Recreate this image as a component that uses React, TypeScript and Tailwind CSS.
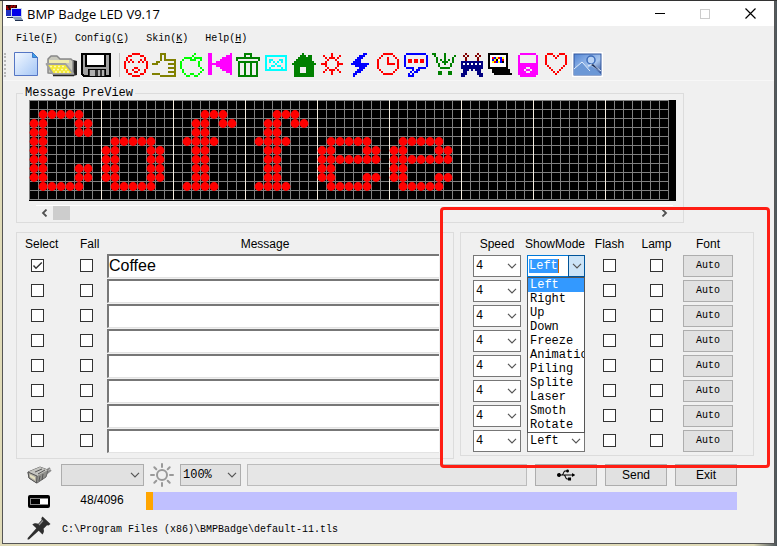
import { useState } from "react";
import type { ReactNode } from "react";
import { FaUsb } from "react-icons/fa";

const MONO_SM = "font-['Liberation_Mono',monospace] text-[10px]";
const MONO_MD = "font-['Liberation_Mono',monospace] text-[12px]";

type Palette = Record<string, string>;

/* Draws a bitmap: every character of a row is one cell, "." is empty. */
function Pixels({ rows, colors, cell = 2 }: { rows: string[]; colors: Palette; cell?: number }) {
  const w = rows[0].length * cell;
  const h = rows.length * cell;
  return (
    <svg width={w} height={h} viewBox={`0 0 ${w} ${h}`} shapeRendering="crispEdges" aria-hidden="true">
      {rows.flatMap((row, y) =>
        row.split("").map((c, x) =>
          c === "." ? null : (
            <rect key={`${x}-${y}`} x={x * cell} y={y * cell} width={cell} height={cell} fill={colors[c]} />
          ),
        ),
      )}
    </svg>
  );
}

const STAMPS: { name: string; colors: Palette; rows: string[] }[] = [
  {
    name: "Face",
    colors: { "#": "#ff0000" },
    rows: [
      "....####....",
      "..##....##..",
      ".#........#.",
      ".#.#....#.#.",
      "#.#.#..#.#.#",
      "#..........#",
      "#..........#",
      "#....##....#",
      ".#..#..#..#.",
      ".#...##...#.",
      "..##....##..",
      "....####....",
    ],
  },
  {
    name: "Thumb up",
    colors: { "#": "#808000" },
    rows: [
      "....###.....",
      "....#.#.....",
      "....#.#.....",
      "....#.######",
      "..##.......#",
      "###.....####",
      "...........#",
      "........####",
      "...........#",
      "........####",
      "####.......#",
      "....########",
    ],
  },
  {
    name: "Apple",
    colors: { "#": "#00ff00" },
    rows: [
      ".......#....",
      "......#.....",
      "..####.####.",
      ".#...###..#.",
      "#........#..",
      "#........#..",
      "#........#..",
      "#.........#.",
      ".#.........#",
      ".#........#.",
      "..#..##..#..",
      "...##..##...",
    ],
  },
  {
    name: "Rewind",
    colors: { "#": "#ff00ff" },
    rows: [
      "##.........#",
      "##.......###",
      "##.....#####",
      "##....######",
      "##..########",
      "############",
      "##..########",
      "##....######",
      "##.....#####",
      "##.......###",
      "##.........#",
      "............",
    ],
  },
  {
    name: "Bin",
    colors: { "#": "#008000" },
    rows: [
      "....####....",
      "....#..#....",
      "############",
      "#..........#",
      ".##########.",
      ".#..#..#..#.",
      ".#..#..#..#.",
      ".#..#..#..#.",
      ".#..#..#..#.",
      ".#..#..#..#.",
      ".#..#..#..#.",
      ".##########.",
    ],
  },
  {
    name: "Mail",
    colors: { "#": "#00ffff" },
    rows: [
      "...........",
      "###########",
      "#.........#",
      "#.##...##.#",
      "#.#.#.#.#.#",
      "#....#....#",
      "#..##.##..#",
      "#.#.....#.#",
      "###########",
      "...........",
      "...........",
      "...........",
    ],
  },
  {
    name: "House",
    colors: { "#": "#008000" },
    rows: [
      ".....#......",
      "....###.##..",
      "...#######..",
      "..########..",
      ".##########.",
      "############",
      ".##########.",
      ".###...####.",
      ".###...####.",
      ".###...####.",
      ".##########.",
      ".##########.",
    ],
  },
  {
    name: "Sun",
    colors: { "#": "#ff0000" },
    rows: [
      ".....#.....",
      ".#...#...#.",
      "..#.###.#..",
      "...#...#...",
      "..#.....#..",
      "###.....###",
      "..#.....#..",
      "...#...#...",
      "..#.###.#..",
      ".#...#...#.",
      ".....#.....",
      "...........",
    ],
  },
  {
    name: "Lightning",
    colors: { "#": "#0000ff" },
    rows: [
      "......##.",
      "....###..",
      "...###...",
      "..###....",
      ".####....",
      "#########",
      "..######.",
      "....###..",
      "...###...",
      "..###....",
      ".##......",
      ".#.......",
    ],
  },
  {
    name: "Clock",
    colors: { "#": "#ff0000" },
    rows: [
      "...#####...",
      "..#.....#..",
      ".#...#...#.",
      "#....#....#",
      "#....#....#",
      "#....####.#",
      "#.........#",
      "#.........#",
      ".#.......#.",
      "..#.....#..",
      "...#####...",
      "...........",
    ],
  },
  {
    name: "Speech",
    colors: { "#": "#0000ff", r: "#ff0000" },
    rows: [
      ".##########.",
      "#..........#",
      "#..........#",
      "#.rr.rr.rr.#",
      "#.rr.rr.rr.#",
      "#..........#",
      "#..........#",
      ".####..####.",
      "....#.##....",
      "...#.##.....",
      "..#.#.......",
      "..###.......",
    ],
  },
  {
    name: "Cart",
    colors: { "#": "#008000" },
    rows: [
      "##....#.....",
      ".#....#....#",
      "..#...#...#.",
      "..#.#.#.#.#.",
      "..#..###..#.",
      "...#..#..#..",
      "...#.....#..",
      "....#####...",
      "............",
      "...##...##..",
      "...##...##..",
      "............",
    ],
  },
  {
    name: "Castle",
    colors: { "#": "#000080", m: "#800000", w: "#ffffff" },
    rows: [
      "..m.....m..",
      ".m.m...m.m.",
      "..m.....m..",
      "..m.....m..",
      "###########",
      "#w#w#w#w#w#",
      "###########",
      "###########",
      ".###.#.###.",
      ".##.....##.",
      "###.....###",
      "##.......##",
    ],
  },
  {
    name: "Computer",
    colors: { "#": "#000000", w: "#ffffff", r: "#ff0000", b: "#0000ff", y: "#ffff00" },
    rows: [
      "##########..",
      "#wwwwwwww#..",
      "#wrbyrbyw#..",
      "#wby#wbrw#..",
      "#wyrbyb#w#..",
      "#wwwwwwww#..",
      "#wwwwwwww#..",
      "##########..",
      "..#########.",
      "..#########.",
      "...#########",
      "............",
    ],
  },
  {
    name: "Player",
    colors: { "#": "#ff00ff" },
    rows: [
      ".########.",
      "#........#",
      "#........#",
      "#........#",
      "#........#",
      "##########",
      "##########",
      "####..####",
      "###.##.###",
      "####..####",
      "##########",
      ".########.",
    ],
  },
  {
    name: "Heart",
    colors: { "#": "#ff0000" },
    rows: [
      ".###...###.",
      "#...#.#...#",
      "#....#....#",
      "#.........#",
      "#.........#",
      "#.........#",
      ".#.......#.",
      "..#.....#..",
      "...#...#...",
      "....#.#....",
      ".....#.....",
      "...........",
    ],
  },
];

const GLYPHS: Record<string, string[]> = {
  C: [".#####..", "##...##.", "##...##.", "##......", "##......", "##......", "##...##.", "##...##.", ".#####.."],
  o: ["", "", "", ".#####..", "##...##.", "##...##.", "##...##.", "##...##.", ".#####.."],
  f: ["...###..", "..##.##.", "..##....", ".####...", "..##....", "..##....", "..##....", "..##....", ".####..."],
  e: ["", "", "", ".#####..", "##...##.", "#######.", "##......", "##...##.", ".#####.."],
};

function LedMatrix({ text }: { text: string }) {
  return (
    <svg width="647" height="101" viewBox="0 0 647 101" role="img" aria-label={`Preview of ${text}`}>
      <rect width="647" height="101" fill="#000" />
      <g shapeRendering="crispEdges">
        {Array.from({ length: 12 }, (_, i) => (
          <rect key={i} x="0" y={i * 9} width="640" height="1" fill="#808080" />
        ))}
        {Array.from({ length: 72 }, (_, i) => (
          <rect key={i} x={i * 9} y="0" width="1" height="100" fill={i % 8 === 0 && i > 0 ? "#f5ede0" : "#808080"} />
        ))}
      </g>
      {text.split("").flatMap((ch, n) =>
        (GLYPHS[ch] ?? []).flatMap((row, y) =>
          row.split("").map((c, x) =>
            c === "#" ? (
              <circle key={`${n}-${x}-${y}`} cx={(n * 8 + x) * 9 + 5} cy={(y + 1) * 9 + 5.5} r="4.4" fill="#ff0000" />
            ) : null,
          ),
        ),
      )}
    </svg>
  );
}

function Chevron() {
  return (
    <svg width="10" height="6" viewBox="0 0 10 6" fill="none" stroke="#555" strokeWidth="1.2" aria-hidden="true">
      <path d="M1 .8 5 4.8 9 .8" />
    </svg>
  );
}

function Tick({ label, initial = false }: { label: string; initial?: boolean }) {
  return (
    <span className="grid size-[13px]">
      <input
        type="checkbox"
        aria-label={label}
        defaultChecked={initial}
        className="peer col-start-1 row-start-1 size-[13px] appearance-none border border-[#333] bg-white"
      />
      <svg
        viewBox="0 0 13 13"
        className="pointer-events-none invisible col-start-1 row-start-1 size-[13px] peer-checked:visible"
        fill="none"
        stroke="#333"
        strokeWidth="1.4"
        aria-hidden="true"
      >
        <path d="M2.5 6.5 5 9.2 10.8 3.5" />
      </svg>
    </span>
  );
}

function Combo({
  label,
  options,
  value,
  box,
}: {
  label: string;
  options: string[];
  value: string;
  box: string;
}) {
  return (
    <span className={`grid h-[22px] items-center border ${box}`}>
      <select
        aria-label={label}
        defaultValue={value}
        className={`col-start-1 row-start-1 h-5 w-full appearance-none pl-[2px] text-black outline-none ${MONO_MD}`}
      >
        {options.map((o) => (
          <option key={o}>{o}</option>
        ))}
      </select>
      <span className="pointer-events-none col-start-1 row-start-1 justify-self-end pr-[3px]">
        <Chevron />
      </span>
    </span>
  );
}

const MODES = ["Left", "Right", "Up", "Down", "Freeze", "Animation", "Piling", "Splite", "Laser", "Smoth", "Rotate"];
const SPEEDS = ["1", "2", "3", "4", "5", "6", "7", "8"];
const ROWS = [1, 2, 3, 4, 5, 6, 7, 8];

function OpenModeCombo() {
  const [mode, setMode] = useState("Left");
  return (
    <div className={`relative flex h-[22px] w-[58px] border border-[#0078d7] bg-white ${MONO_MD}`}>
      <div className="flex flex-1 items-center pl-px">
        <input
          role="combobox"
          aria-label="Show mode 1"
          aria-expanded="true"
          aria-controls="mode-list"
          value={mode}
          readOnly
          className="h-[14px] w-[30px] border-r border-[#c86400] bg-[#3399ff] text-white outline-none"
        />
      </div>
      <button
        type="button"
        aria-label="Close show mode list"
        className="-my-px -mr-px flex w-[17px] items-center justify-center border border-[#005499] bg-[#cce4f7]"
      >
        <Chevron />
      </button>
      <ul
        id="mode-list"
        role="listbox"
        aria-label="Show modes"
        className="absolute top-[21px] -right-px -left-px z-10 overflow-hidden border border-[#555] bg-white leading-[14px]"
      >
        {MODES.map((m) => (
          <li
            key={m}
            role="option"
            aria-selected={m === mode}
            onClick={() => setMode(m)}
            className="h-[14px] pl-[2px] aria-selected:bg-[#3399ff] aria-selected:text-white"
          >
            {m}
          </li>
        ))}
      </ul>
    </div>
  );
}

function CenteredOverBox({ children }: { children: ReactNode }) {
  return <span className="flex w-[13px] justify-center">{children}</span>;
}

function TitleBar() {
  return (
    <header className="flex h-[25px] items-center bg-white">
      <svg width="17" height="17" viewBox="0 0 17 17" className="ml-[3px]" aria-hidden="true">
        <rect x="0" y="0" width="11" height="5" fill="#200000" />
        <path d="M1 1v3h2M5 1v3M5 1h2M8 1v3M8 1h2" stroke="#e00000" fill="none" />
        <rect x="0" y="5" width="7" height="6" fill="#2030c0" />
        <rect x="5" y="3" width="11" height="9" fill="#c8d8e8" />
        <rect x="6" y="4" width="9" height="7" fill="#0000e8" />
        <path d="M6 12h9l2 3H9z" fill="#8aa0b8" />
        <path d="M1 12h6v1H1zM9 15h8v1H9z" fill="#203050" />
      </svg>
      <h1 className="ml-1 flex-1 font-['Open_Sans',sans-serif] text-[13px] leading-4 text-black">BMP Badge LED V9.17</h1>
      <div className="mr-[18px] flex items-center gap-[35px]">
        <button type="button" aria-label="Minimize" className="flex h-3 w-[10px] items-center">
          <span className="h-px w-full bg-black" />
        </button>
        <button type="button" aria-label="Maximize" disabled className="size-[10px] border border-[#ccc]" />
        <button type="button" aria-label="Close" className="size-[11px]">
          <svg width="11" height="11" viewBox="0 0 11 11" stroke="#000" strokeWidth="1.2" aria-hidden="true">
            <path d="M.5.5l10 10M10.5.5l-10 10" />
          </svg>
        </button>
      </div>
    </header>
  );
}

function MenuBar() {
  const menus = [
    ["File", "F"],
    ["Config", "C"],
    ["Skin", "K"],
    ["Help", "H"],
  ];
  return (
    <nav className={`flex h-[23px] items-center gap-[17px] pt-px pl-[13px] ${MONO_SM}`}>
      {menus.map(([name, key]) => (
        <button key={name} type="button">
          {name}(<span className="underline">{key}</span>)
        </button>
      ))}
    </nav>
  );
}

function Toolbar() {
  return (
    <div role="toolbar" aria-label="Tools" className="flex h-8 items-center border-b border-[#f7f7f7] pl-px">
      <span className="mr-[8px] h-6 w-[2px] border-l-2 border-dotted border-[#b8b8b8]" />
      <button type="button" aria-label="New">
        <svg width="25" height="25" viewBox="0 0 25 25" aria-hidden="true">
          <defs>
            <linearGradient id="page" x1="0" y1="0" x2="1" y2="1">
              <stop offset="0" stopColor="#f4f9ff" />
              <stop offset="1" stopColor="#a4c6f6" />
            </linearGradient>
          </defs>
          <path d="M.5.5h18l5 5v18H.5z" fill="url(#page)" stroke="#5576c4" />
          <path d="M18.5.5v5h5z" fill="#3da0e8" stroke="#3f78c8" />
        </svg>
      </button>
      <button type="button" aria-label="Open" className="ml-[6px]">
        <svg width="33" height="24" viewBox="0 0 33 24" strokeLinejoin="round" aria-hidden="true">
          <path d="M28 7l4 1v14l-4 1z" fill="#222" />
          <path d="M3 20V6l3-3h6l3 3h11l2 2v13z" fill="#c9c9bd" stroke="#888" strokeWidth="1.5" />
          <path d="M4 7h20v3H4z" fill="#f0ecae" />
          <path d="M1.500 11h19l8 10H8z" fill="#f3e936" stroke="#a0a0a0" strokeWidth="1.800" />
          <path d="M5 13.500h15M8 16.500h14M10 19h14" stroke="#fff9b0" strokeWidth="1.500" strokeDasharray="2 2" />
          <path d="M8 22.500h21" stroke="#222" strokeWidth="1.500" />
        </svg>
      </button>
      <button type="button" aria-label="Save" className="ml-[3px]">
        <svg width="30" height="24" viewBox="0 0 30 24" shapeRendering="crispEdges" aria-hidden="true">
          <path d="M1 1h28v22H3l-2-2z" fill="#a0a0a0" stroke="#000" strokeWidth="2" />
          <rect x="5" y="1" width="19" height="12" fill="#fff" stroke="#000" strokeWidth="2" />
          <rect x="7" y="16" width="17" height="7" fill="#333" stroke="#000" strokeWidth="1" />
          <path d="M9 17h5v6H9zM17 17h2v6h-2zM21 17h2v6h-2z" fill="#b0b0b0" />
        </svg>
      </button>
      <span className="mr-1 ml-2 h-6 w-px bg-[#c4c4c4]" />
      <div className="flex gap-1">
        {STAMPS.map((s) => (
          <button key={s.name} type="button" aria-label={s.name} className="flex size-6 items-center justify-center">
            <Pixels rows={s.rows} colors={s.colors} />
          </button>
        ))}
      </div>
      <button type="button" aria-label="Picture" className="ml-1">
        <svg width="31" height="25" viewBox="0 0 31 25" aria-hidden="true">
          <defs>
            <linearGradient id="sky" x1="0" y1="0" x2="1" y2="1">
              <stop offset="0" stopColor="#5285d4" />
              <stop offset=".6" stopColor="#a8c6ee" />
              <stop offset="1" stopColor="#26468e" />
            </linearGradient>
          </defs>
          <rect width="31" height="25" fill="#fff" />
          <rect x="2" y="2" width="27" height="21" fill="url(#sky)" stroke="#31579f" />
          <circle cx="19" cy="8" r="4" fill="#b8d2f4" stroke="#3d6cba" strokeWidth="1.5" />
          <path d="M2 17l8-7 6 6 3-2 10 8v1H2z" fill="#6c98d6" />
          <path d="M2 17l8-7 8 9M16 14l4-2 9 7" stroke="#e2eefc" fill="none" />
          <path d="M19 13l2-1 6 6z" fill="#1c2c54" />
        </svg>
      </button>
    </div>
  );
}

function Preview() {
  return (
    <fieldset className="w-[668px] max-w-full min-w-0 border border-[#dcdcdc]">
      <legend className={`ml-[6px] px-[2px] leading-[14px] ${MONO_MD}`}>Message PreView</legend>
      <div className="overflow-hidden pb-[2px] pl-3">
        <LedMatrix text="Coffee" />
        <div className="mt-1 mr-[10px] ml-[7px] flex h-[15px] items-center border-t border-white">
          <button type="button" aria-label="Scroll left" className="flex w-[17px] justify-center">
            <svg width="7" height="8" viewBox="0 0 7 8" fill="none" stroke="#505050" strokeWidth="1.8" aria-hidden="true">
              <path d="M5.500.5 2 4l3.500 3.500" />
            </svg>
          </button>
          <span className="h-[14px] w-[17px] bg-[#cdcdcd]" />
          <button type="button" aria-label="Scroll right" className="ml-auto flex w-[17px] justify-center">
            <svg width="7" height="8" viewBox="0 0 7 8" fill="none" stroke="#505050" strokeWidth="1.8" aria-hidden="true">
              <path d="M1.500.5 5 4 1.500 7.500" />
            </svg>
          </button>
        </div>
      </div>
    </fieldset>
  );
}

function MessagePanel() {
  return (
    <section aria-label="Messages" className="min-w-0 flex-1 border border-[#dcdcdc] pb-[5px] text-[12px]">
      <div className="grid h-5 grid-cols-[63px_27px_1fr] items-center pt-[2px]">
        <span className="pl-2">Select</span>
        <span>Fall</span>
        <span className="pr-[30px] text-center">Message</span>
      </div>
      {ROWS.map((n) => (
        <div key={n} className="grid h-[25px] grid-cols-[63px_27px_1fr] items-center">
          <span className="pl-[14px]">
            <Tick label={`Select message ${n}`} initial={n === 1} />
          </span>
          <Tick label={`Fall ${n}`} />
          <input
            type="text"
            aria-label={`Message ${n}`}
            defaultValue={n === 1 ? "Coffee" : ""}
            className="mr-[14px] h-6 min-w-0 border-t-2 border-b border-l-2 border-t-[#777] border-b-[#e3e3e3] border-l-[#777] bg-white text-[16px] leading-5 outline-none"
          />
        </div>
      ))}
    </section>
  );
}

function SettingsPanel() {
  const cols = "grid grid-cols-[54px_76px_47px_33px_50px] items-center pl-3";
  return (
    <section aria-label="Display settings" className="w-[294px] shrink-0 border border-[#dcdcdc] pb-[2px] text-[12px]">
      <div className={`h-5 pt-[2px] ${cols}`}>
        <span className="w-12 text-center">Speed</span>
        <span className="flex w-[56px] justify-center">ShowMode</span>
        <CenteredOverBox>Flash</CenteredOverBox>
        <CenteredOverBox>Lamp</CenteredOverBox>
        <span className="text-center">Font</span>
      </div>
      {ROWS.map((n) => (
        <div key={n} className={`h-[25px] ${cols}`}>
          <Combo label={`Speed ${n}`} options={SPEEDS} value="4" box="w-12 border-[#777] bg-white" />
          {n === 1 ? (
            <OpenModeCombo />
          ) : (
            <Combo label={`Show mode ${n}`} options={MODES} value="Left" box="w-[58px] border-[#777] bg-white" />
          )}
          <Tick label={`Flash ${n}`} />
          <Tick label={`Lamp ${n}`} />
          <button type="button" className={`h-[22px] border border-[#adadad] bg-[#e1e1e1] ${MONO_SM}`}>
            Auto
          </button>
        </div>
      ))}
    </section>
  );
}

function Footer() {
  const button = "flex h-[22px] w-[62px] items-center justify-center border border-[#adadad] bg-[#e1e1e1] text-[12px]";
  return (
    <footer className="pr-[37px]">
      <div className="mt-[5px] flex h-[22px] items-center">
        <svg width="25" height="20" viewBox="0 0 25 20" className="mr-[9px] ml-[11px]" aria-hidden="true">
          <path d="M17 7l6-4M19 9l5-4" stroke="#8a8a8a" strokeWidth="2" />
          <path d="M1 7l12-5 8 3-2 7-9 6-8-5z" fill="#8f8f8b" stroke="#666" />
          <path d="M1 7l9 4 11-6-8-3z" fill="#c4c4c0" />
          <path d="M10 11l-.5 7L2 13 1 7z" fill="#b0aea4" stroke="#555" />
          <path d="M3 9.500l5 2.500v3l-5-3z" fill="#e4e0c0" />
          <path d="M8 7l7-3M11 9l7-4M13 11l-1 5M16 9l-1 6" stroke="#555" />
        </svg>
        <Combo label="Device" options={[""]} value="" box="w-[83px] border-[#adadad] bg-[#e1e1e1]" />
        <svg width="24" height="24" viewBox="0 0 24 24" className="mx-[6px]" fill="none" stroke="#999" strokeWidth="2" strokeLinecap="round" aria-hidden="true">
          <circle cx="12" cy="12" r="5" />
          <path d="M12 1v3M12 20v3M1 12h3M20 12h3M4.300 4.300l2 2M17.700 17.700l2 2M4.300 19.700l2-2M17.700 6.300l2-2" />
        </svg>
        <Combo label="Brightness" options={["25%", "50%", "75%", "100%"]} value="100%" box="w-[61px] border-[#adadad] bg-[#e1e1e1]" />
        <div className="mr-2 ml-[6px] h-[22px] flex-1 border border-[#bcbcbc] bg-[#e6e6e6]" />
        <div className="flex gap-2">
          <button type="button" aria-label="Connect over USB" className={button}>
            <FaUsb size={18} />
          </button>
          <button type="button" className={button}>
            Send
          </button>
          <button type="button" className={button}>
            Exit
          </button>
        </div>
      </div>

      <div className="mt-[6px] flex h-[18px] items-center">
        <svg width="22" height="13" viewBox="0 0 22 13" className="mr-[8px] ml-3" aria-hidden="true">
          <rect width="22" height="13" rx="2" fill="#000" />
          <rect x="2.500" y="3.500" width="17" height="6" fill="#000" stroke="#888" />
          <rect x="12" y="4" width="8" height="5" fill="#fff" />
        </svg>
        <label htmlFor="memory" className="w-[88px] pb-[3px] text-center text-[12px] leading-4">
          48/4096
        </label>
        <div id="memory" role="progressbar" aria-label="Memory used" aria-valuenow={48} aria-valuemax={4096} className="h-[18px] flex-1 bg-[#c0c0ff]">
          <div className="h-full w-[7px] bg-[#ffa500]" />
        </div>
      </div>

      <div className="mt-[6px] flex h-6 items-center">
        <svg width="24" height="24" viewBox="0 0 24 24" className="mr-[11px] ml-[11px]" fill="#2f2f2f" aria-hidden="true">
          <path d="M15.500.5 23.500 8l-2 1.500-1.500-.3-3.500 3.600c.8 2 .5 4-1 5.700l-3.800-3.700L2 23.500.5 23.600.7 22l8.600-9.800L5.300 8.500c1.700-1.500 4-1.700 6-.8L14.700 4l-.4-1.700z" />
          <path d="M16 4.500 12 9" stroke="#999" strokeWidth="1.200" />
        </svg>
        <p className={`pt-[2px] ${MONO_SM}`}>C:\Program Files (x86)\BMPBadge\default-11.tls</p>
      </div>
    </footer>
  );
}

export default function App() {
  return (
    <div className="min-h-screen border-t border-[#333] bg-linear-to-r from-[#e0dbb8] from-97% to-[#4b5358] to-100% px-[2px] pb-[2px] font-['Liberation_Sans',sans-serif] text-black">
      <div className="border-x border-b border-[#555] bg-[#f0f0f0]">
        <TitleBar />
        <MenuBar />
        <Toolbar />
        <main className="relative pt-[5px] pb-[3px] pl-[13px]">
          <Preview />
          <div className="mt-[9px] mr-5 flex items-start gap-[6px]">
            <MessagePanel />
            <SettingsPanel />
          </div>
          <Footer />
          <div className="pointer-events-none absolute top-[126px] right-1 z-20 h-[261px] w-[330px] rounded border-[3px] border-[#ff1e14]" />
        </main>
      </div>
    </div>
  );
}
